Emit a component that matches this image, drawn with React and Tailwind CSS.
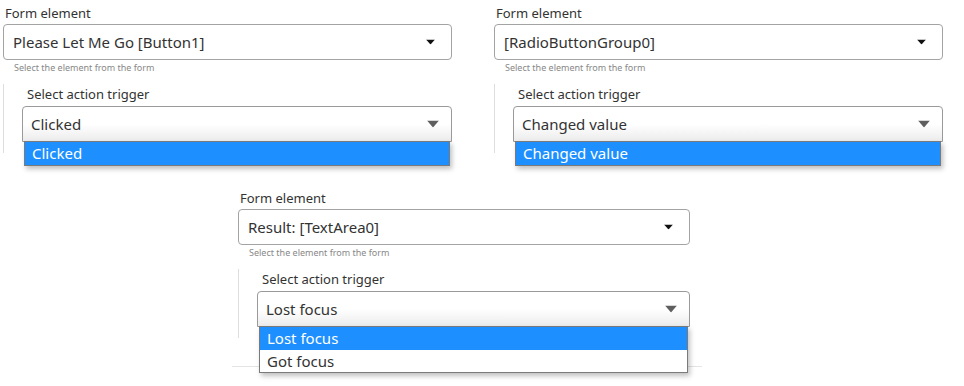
import React from "react";

const Caret = ({ big }) =>
  big ? (
    <svg width="12" height="7" viewBox="0 0 12 7" className="absolute right-[12px] top-1/2 -translate-y-1/2">
      <path d="M0 0 H12 L6 7 Z" fill="#5f5f5f" />
    </svg>
  ) : (
    <svg width="9" height="5" viewBox="0 0 9 5" className="absolute right-[16px] top-1/2 -translate-y-1/2">
      <path d="M0 0 H9 L4.5 5 Z" fill="#111" />
    </svg>
  );

// one "form element + action trigger" block with its opened list
const TriggerPanel = ({ element, options, selected, withRule, wide }) => (
  <div className={wide ? "w-[452px] text-[#333]" : "w-[449px] text-[#333]"} style={{ fontFamily: "'Noto Sans', 'Open Sans', sans-serif" }}>
    <div className="text-[13px] leading-[17px] pl-[2px]">Form element</div>
    <div className="relative mt-[2px] h-[36px] border border-[#a3a3a3] rounded-[4px] bg-white flex items-center pl-[9px] text-[15px]">
      {element}
      <Caret />
    </div>
    <div className="text-[9px] leading-[12px] text-[#888] ml-[11px] mt-[2px]">Select the element from the form</div>
    <div className="mt-[10px] border-l border-[#dedede] pt-[2px] pb-[11px] pl-[18px]">
      <div className="text-[13px] leading-[17px] pl-[5px]">Select action trigger</div>
      <div className="relative mt-[3px] h-[36px] border border-[#9a9a9a] rounded-t-[4px] bg-gradient-to-b from-white from-50% to-[#ececec] flex items-center pl-[8px] text-[15px]">
        {selected}
        <Caret big />
        <div className="absolute z-10 top-full left-[1px] right-[1px] bg-white border border-[#7a7a7a] shadow-[2px_3px_5px_rgba(0,0,0,0.25)] text-[15px]">
          {options.map((opt) => (
            <div
              key={opt}
              className={
                opt === selected
                  ? "h-[23px] leading-[23px] pl-[7px] bg-[#1e8fff] text-white"
                  : "h-[22px] leading-[22px] pl-[7px] text-[#333]"
              }
            >
              {opt}
            </div>
          ))}
        </div>
      </div>
    </div>
    {withRule && <div className="-ml-[6px] w-[470px] h-px bg-[#e4e4e4] mt-[28px]" />}
  </div>
);

export default function App() {
  return (
    <div className="w-[964px] h-[386px] bg-white overflow-hidden">
      <div className="flex gap-[42px] pl-[3px] pt-[5px]">
        <TriggerPanel element="Please Let Me Go [Button1]" options={["Clicked"]} selected="Clicked" />
        <TriggerPanel element="[RadioButtonGroup0]" options={["Changed value"]} selected="Changed value" />
      </div>
      <div className="ml-[238px] mt-[37px]">
        <TriggerPanel
          element="Result: [TextArea0]"
          options={["Lost focus", "Got focus"]}
          selected="Lost focus"
          withRule
          wide
        />
      </div>
    </div>
  );
}
